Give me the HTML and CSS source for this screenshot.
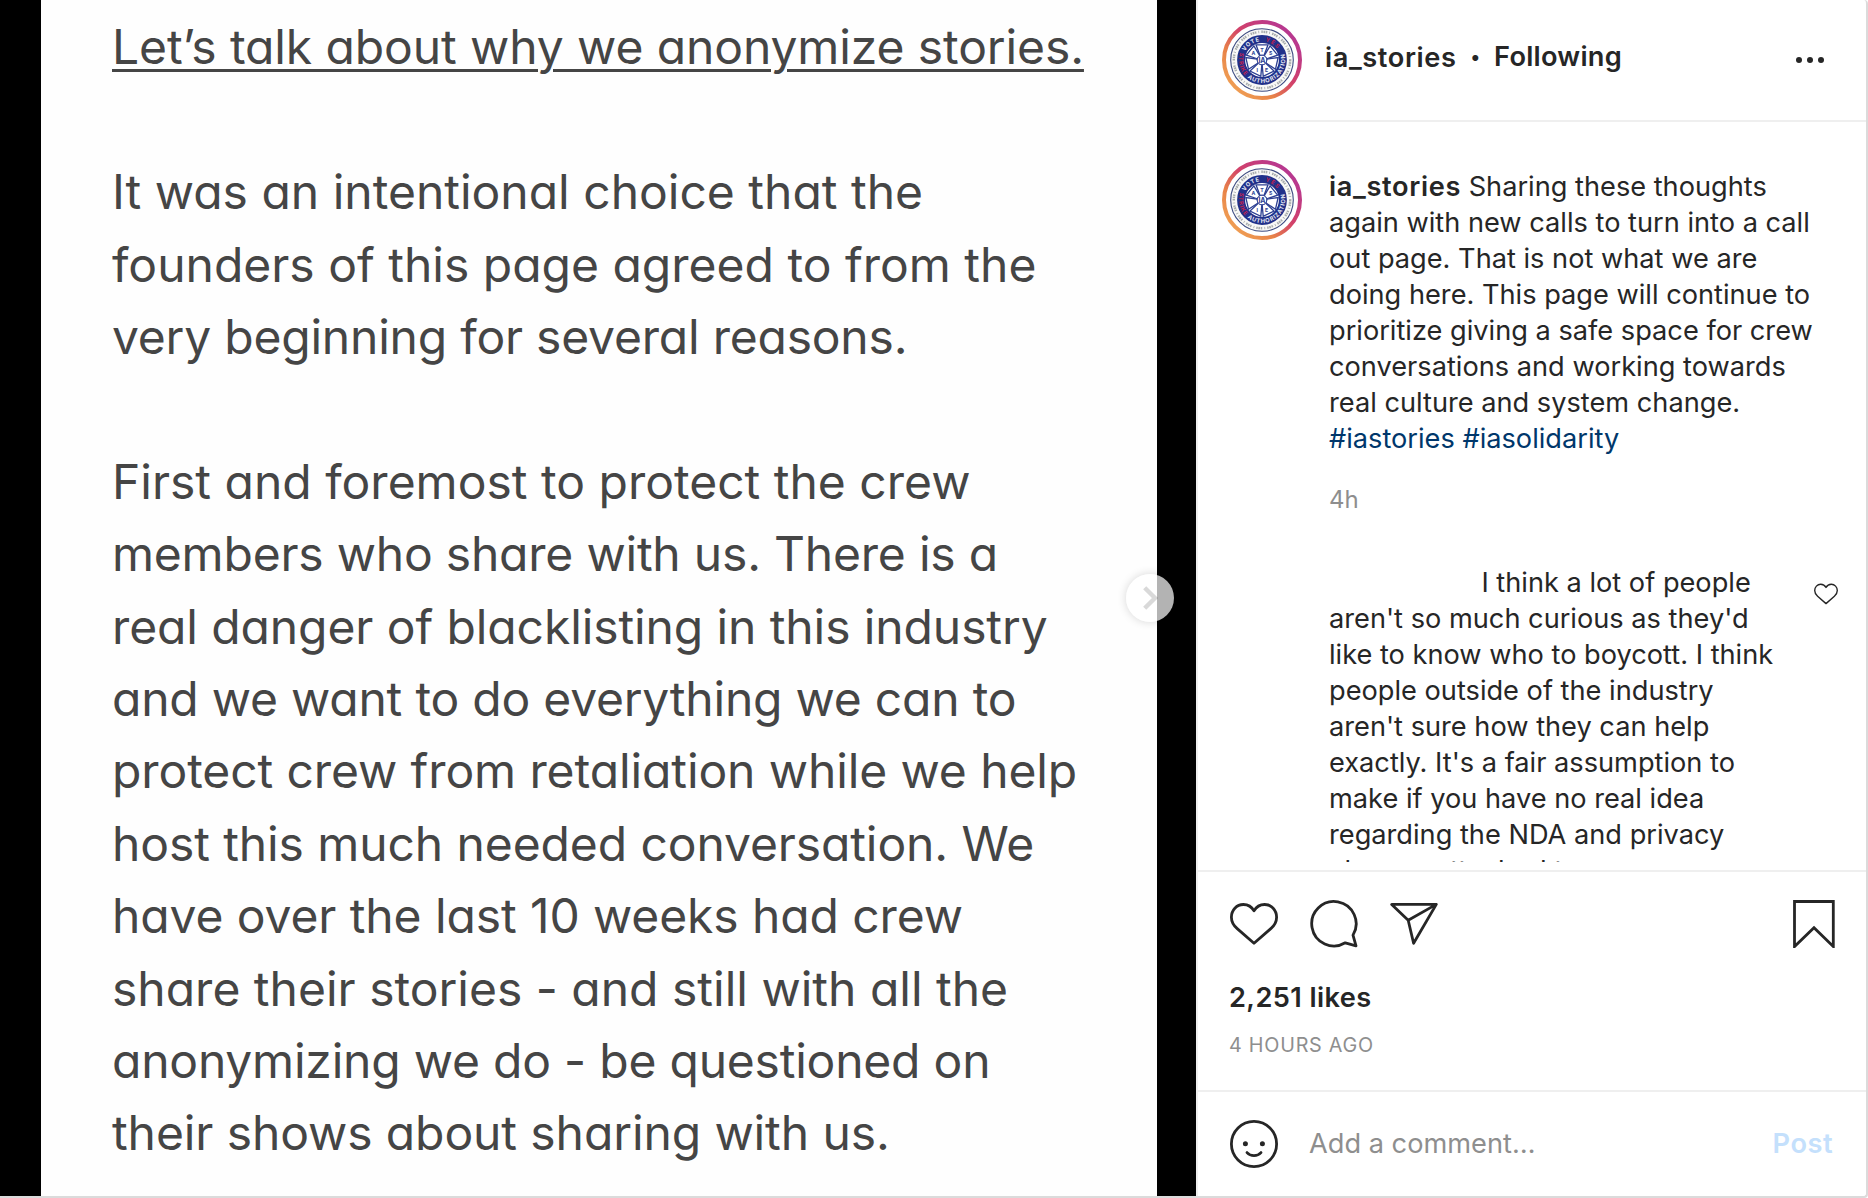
FILE: index.html
```html
<!DOCTYPE html>
<html lang="en">
<head>
<meta charset="utf-8">
<title>ia_stories</title>
<link rel="stylesheet" href="styles.css">
</head>
<body>
<svg class="defs" width="0" height="0" aria-hidden="true">
  <defs>
    <linearGradient id="ring" x1="0.1" y1="0.9" x2="0.85" y2="0.15">
      <stop offset="0" stop-color="#f0a155"/>
      <stop offset="0.3" stop-color="#e88348"/>
      <stop offset="0.6" stop-color="#d2416a"/>
      <stop offset="1" stop-color="#b8388f"/>
    </linearGradient>
    <path id="arc-top" d="M-19 0A19 19 0 0 1 19 0"/>
    <path id="arc-bottom" d="M-21.5 -8.5A23.1 23.1 0 1 0 21.5 -8.5"/>
    <path id="arm" d="M-2 -4.5L-6 -15.2H6L2 -4.5Z"/>
    <symbol id="seal" viewBox="-40 -40 80 80">
      <circle r="38" fill="#fff" stroke="url(#ring)" stroke-width="4"/>
      <circle r="31.3" fill="#f8f8f6" stroke="#3c4a80" stroke-width="1.1"/>
      <circle r="28.2" fill="none" stroke="#a9adae" stroke-width="2.4" stroke-dasharray="1.5 .7 1.7 .6 1.5 2 .8 2.2"/>
      <circle r="20.9" fill="#fff" stroke="#21318a" stroke-width="8"/>
      <text class="seal-text" fill="#e8ebf5"><textPath href="#arc-top" startOffset="9" textLength="18">VOTE</textPath></text>
      <text class="seal-text" fill="#c0224f"><textPath href="#arc-top" startOffset="33" textLength="14">YES</textPath></text>
      <text class="seal-text" fill="#e8ebf5"><textPath href="#arc-bottom" startOffset="1" textLength="86"><tspan fill="#c0224f">STRIKE</tspan> AUTHORIZATION</textPath></text>
      <g fill="#fff" stroke="#2c3f92" stroke-width="1.3">
        <use href="#arm"/>
        <use href="#arm" transform="rotate(51.4)"/>
        <use href="#arm" transform="rotate(102.8)"/>
        <use href="#arm" transform="rotate(154.2)"/>
        <use href="#arm" transform="rotate(205.7)"/>
        <use href="#arm" transform="rotate(257.1)"/>
        <use href="#arm" transform="rotate(308.6)"/>
        <circle r="4.8" stroke-width="1"/>
      </g>
      <g class="seal-core" fill="#2c3f92">
        <text y="2.6">IA</text>
        <text y="-7.8">T</text>
        <text x="8.6" y="-5">S</text>
        <text x="-8.6" y="-5">A</text>
        <text x="4.7" y="12.2">E</text>
        <text x="-4.7" y="12.2">I</text>
      </g>
    </symbol>
    <symbol id="heart" viewBox="0 0 48 48">
      <path d="M24 43.2L7.2 28.6C3.4 25.3 1.4 21.6 1.4 17.2C1.4 10.2 6.6 4.5 13.4 4.5C18 4.5 21.6 6.6 24 10.9C26.4 6.6 30 4.5 34.6 4.5C41.4 4.5 46.6 10.2 46.6 17.2C46.6 21.6 44.6 25.3 40.8 28.6Z"/>
    </symbol>
  </defs>
</svg>

<main class="post">
  <section class="media">
    <div class="slide">
      <p class="title">Let’s talk about why we anonymize stories.</p>
      <p>It was an intentional choice that the<br>founders of this page agreed to from the<br><span class="snug">very beginning for several reasons.</span></p>
      <p>First and foremost to protect the crew<br><span class="snug">members who share with us. There is a</span><br><span class="trim">real danger of blacklisting in this industry</span><br><span class="snug">and we want to do everything we can to</span><br><span class="trim">protect crew from retaliation while we help</span><br><span class="trim">host this much needed conversation. We</span><br><span class="trim">have over the last 10 weeks had crew</span><br>share their stories - and still with all the<br><span class="snug">anonymizing we do - be questioned on</span><br><span class="trim">their shows about sharing with us.</span></p>
    </div>
    <button class="next" aria-label="Next">
      <svg width="48" height="48" viewBox="0 0 48 48"><path d="M18.7 13.7L29 24L18.7 34.3"/></svg>
    </button>
  </section>

  <aside class="panel">
    <header class="head">
      <svg class="avatar"><use href="#seal"/></svg>
      <span class="user">ia_stories</span>
      <span class="dot">•</span>
      <span class="follow">Following</span>
      <svg class="more" width="28" height="8" viewBox="0 0 28 8"><circle cx="3" cy="4" r="3"/><circle cx="14" cy="4" r="3"/><circle cx="25" cy="4" r="3"/></svg>
    </header>

    <div class="thread">
      <article class="entry">
        <svg class="avatar"><use href="#seal"/></svg>
        <div class="body">
          <p><b>ia_stories</b> Sharing these thoughts<br>again with new calls to turn into a call<br>out page. That is not what we are<br>doing here. This page will continue to<br>prioritize giving a safe space for crew<br>conversations and working towards<br>real culture and system change.<br><a>#iastories</a> <a>#iasolidarity</a></p>
          <time>4h</time>
        </div>
      </article>
      <article class="entry reply">
        <p class="body">I think a lot of people<br>aren't so much curious as they'd<br>like to know who to boycott. I think<br>people outside of the industry<br>aren't sure how they can help<br>exactly. It's a fair assumption to<br>make if you have no real idea<br>regarding the NDA and privacy<br>clauses attached to</p>
        <svg class="like"><use href="#heart"/></svg>
      </article>
    </div>

    <section class="actions">
      <div class="icons">
        <svg class="icon"><use href="#heart"/></svg>
        <svg class="icon" viewBox="0 0 48 48"><path d="M43 35.1A22.2 22.2 0 1 0 35.3 42.8L46 45.8Z"/></svg>
        <svg class="icon" viewBox="0 0 48 48"><path d="M1.7 4.4H46.3L23.6 43.3L18.2 20.2ZM18.2 20.2L46.3 4.4"/></svg>
        <svg class="icon save" viewBox="0 0 48 48"><path d="M43.3 46.6L24 27.8L4.5 46.6V1.5H43.3Z"/></svg>
      </div>
      <p class="likes">2,251 likes</p>
      <p class="when">4 HOURS AGO</p>
    </section>

    <footer class="compose">
      <svg class="icon" viewBox="0 0 48 48"><circle cx="24" cy="24" r="22.6"/><path d="M17 32.6C20.6 36.6 27.4 36.6 31 32.6"/><circle class="eye" cx="15.4" cy="23.8" r="2.5"/><circle class="eye" cx="32.4" cy="23.8" r="2.5"/></svg>
      <span class="field">Add a comment…</span>
      <span class="submit">Post</span>
    </footer>
  </aside>
</main>
</body>
</html>
```
FILE: styles.css
```css
* { box-sizing: border-box; }
body {
  margin: 0;
  background: #fff;
  color: #262626;
  font: 27.2px/36px Inter, "Liberation Sans", sans-serif;
}
p { margin: 0; }
.defs { display: block; height: 0; }

.post {
  display: flex;
  width: 1868px;
  height: 1198px;
  border-right: 2px solid #dbdbdb;
  border-bottom: 2px solid #dbdbdb;
  border-radius: 0 4px 4px 0;
  overflow: hidden;
}

/* Slide */
.media {
  position: relative;
  flex: 0 0 1196px;
  padding: 0 39.5px 0 40.5px;
  background: #000;
}
.slide {
  display: flex;
  flex-direction: column;
  gap: 72.4px;
  height: 100%;
  padding: 11.4px 0 0 71.5px;
  background: #fefefe;
  color: #454545;
  font-size: 48px;
  font-weight: 420;
  line-height: 72.4px;
  font-feature-settings: "cv11";
  white-space: nowrap;
}
.title {
  align-self: flex-start;
  letter-spacing: -0.1px;
  text-decoration: underline;
  text-decoration-thickness: 2.5px;
  text-underline-offset: 5px;
}
.trim { letter-spacing: -.1px; }
.snug { letter-spacing: -.21px; }
.next {
  position: absolute;
  left: 1126px;
  top: 574px;
  width: 48px;
  height: 48px;
  padding: 0;
  border: 0;
  border-radius: 50%;
  background: rgba(255, 255, 255, .7);
  box-shadow: 0 0 10px rgba(0, 0, 0, .16);
}
.next svg { display: block; fill: none; stroke: rgba(0, 0, 0, .15); stroke-width: 4.4; }

/* Side panel */
.panel {
  display: flex;
  flex-direction: column;
  flex: 1;
  min-width: 0;
  border-left: 2px solid #efefef;
}
.avatar { flex: none; width: 80px; height: 80px; }
.seal-text { font: 700 5.8px Inter, sans-serif; }
.seal-core { font: 700 5.2px Inter, sans-serif; text-anchor: middle; }
.seal-core text:first-child { font-size: 7px; }

.head {
  display: flex;
  align-items: center;
  height: 122px;
  padding: 0 42px 0 24px;
  border-bottom: 2px solid #efefef;
  font-weight: 600;
}
.user { margin: -4px 0 0 23px; letter-spacing: .6px; }
.dot { margin: -4px 0 0 14px; font-size: 19px; }
.follow { margin: -7px 0 0 14px; letter-spacing: .25px; }
.more { margin-left: auto; fill: #262626; }

.thread {
  display: flex;
  flex-direction: column;
  gap: 53px;
  height: 740px;
  padding: 38px 28px 0 24px;
  overflow: hidden;
  white-space: nowrap;
}
.entry { display: flex; flex: none; gap: 27px; }
.body { padding-top: 9px; }
.body b { font-weight: 600; letter-spacing: .65px; }
.body a { color: #00376b; }
.body time {
  display: block;
  margin-top: 31px;
  color: #8e8e8e;
  font-size: 24px;
  line-height: 24px;
}
.reply { padding-left: 107px; justify-content: space-between; }
.reply .body { padding: 0; text-indent: 152.4px; }
.like { width: 24px; height: 24px; margin-top: 17px; }
.like, .icon { flex: none; fill: none; stroke: #262626; stroke-width: 2.8; stroke-linejoin: round; stroke-linecap: round; }
.eye { fill: #262626; stroke: none; }

.actions {
  height: 220px;
  margin-top: 8px;
  padding: 28px 28px 0 32px;
  border-top: 2px solid #efefef;
}
.icons { display: flex; gap: 32px; }
.icon { display: block; width: 48px; height: 48px; }
.save { margin-left: auto; stroke-linejoin: miter; }
.likes { margin: 32px 0 0 -1px; font-weight: 600; letter-spacing: .4px; }
.when { margin: 17px 0 0 -1px; color: #8e8e8e; font-size: 19.8px; line-height: 24px; letter-spacing: .75px; }

.compose {
  display: flex;
  align-items: center;
  height: 106px;
  padding: 0 33px 0 32px;
  border-top: 2px solid #efefef;
}
.field { margin-left: 31px; color: #8e8e8e; }
.submit { margin-left: auto; color: #c4e0fc; font-weight: 600; letter-spacing: .5px; }
```
